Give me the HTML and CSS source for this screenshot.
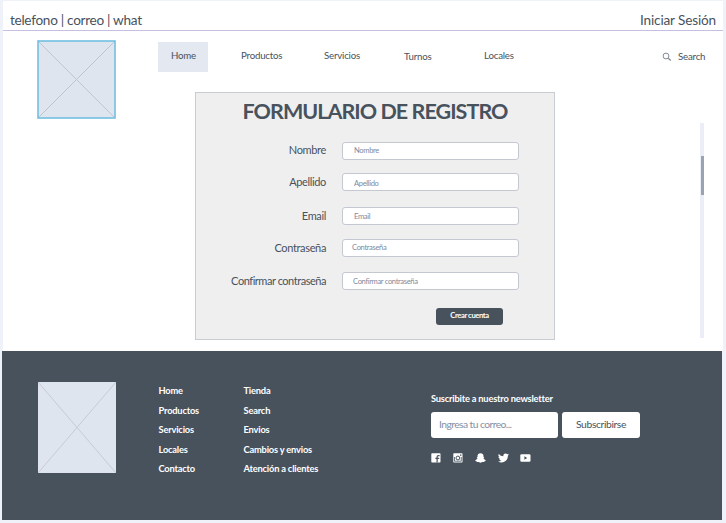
FILE: index.html
```html
<!DOCTYPE html>
<html lang="es">
<head>
<meta charset="utf-8">
<title>Formulario de registro</title>
<link rel="stylesheet" href="styles.css">
</head>
<body>
<div class="sheet">
  <div class="topbar"><span class="contact">telefono | correo | what</span><a class="login">Iniciar Sesión</a></div>
  <div class="main">
    <svg class="logo" viewBox="0 0 79 79"><rect x="1" y="1" width="77" height="77" fill="#dfe5ee" stroke="#72bfe2" stroke-width="1.6"/><path d="M2 2 77 77M77 2 2 77" stroke="#bfc5ce"/></svg>
    <div class="column">
      <nav class="nav">
        <a class="home">Home</a>
        <a class="productos">Productos</a>
        <a class="servicios">Servicios</a>
        <a class="turnos">Turnos</a>
        <a class="locales">Locales</a>
        <svg class="lens" viewBox="0 0 10 10" fill="none" stroke="#858b96"><circle cx="4" cy="4" r="2.9"/><path d="M6.2 6.2 8.8 8.6" stroke-width="1.3"/></svg>
        <a class="search">Search</a>
      </nav>
      <div class="content">
        <form class="panel">
          <h1>FORMULARIO DE REGISTRO</h1>
          <div class="row"><label>Nombre</label><div class="field">Nombre</div></div>
          <div class="row r2"><label>Apellido</label><div class="field f2">Apellido</div></div>
          <div class="row r3"><label>Email</label><div class="field f3">Email</div></div>
          <div class="row r4"><label>Contraseña</label><div class="field f4">Contraseña</div></div>
          <div class="row r5"><label class="wide">Confirmar contraseña</label><div class="field f5">Confirmar contraseña</div></div>
          <div class="create">Crear cuenta</div>
        </form>
        <div class="scroll"><div class="thumb"></div></div>
      </div>
    </div>
  </div>
</div>
<footer class="footer">
  <svg class="footlogo" viewBox="0 0 78 91"><path fill="#dfe5ee" d="M0 0h78v91H0z"/><path d="M0 0 78 91M78 0 0 91" stroke="#c6cbd2"/></svg>
  <div class="links first"><a>Home</a><a>Productos</a><a>Servicios</a><a>Locales</a><a>Contacto</a></div>
  <div class="links second"><a>Tienda</a><a>Search</a><a>Envios</a><a>Cambios y envios</a><a>Atención a clientes</a></div>
  <div class="news">
    <div class="newstitle">Suscribite a nuestro newsletter</div>
    <div class="signup"><div class="mail">Ingresa tu correo...</div><div class="subscribe">Subscribirse</div></div>
    <div class="social">
      <svg width="10" height="10" viewBox="0 0 10 10"><rect x=".3" y=".3" width="9.2" height="9.2" rx=".7" fill="#fff"/><path d="M8.6 2.7H7.4Q6.1 2.7 6.1 4v5.5M4.4 5.4h3.8" fill="none" stroke="#48525d" stroke-width="1.2"/></svg>
      <svg width="10" height="10" viewBox="0 0 10 10"><rect x=".3" y=".3" width="9.2" height="9.2" rx=".7" fill="#fff"/><path d="M1.5 4v4.2h6.8V4" fill="none" stroke="#48525d" stroke-width=".8"/><circle cx="4.9" cy="5" r="1.9" fill="none" stroke="#48525d"/><path d="M7 1.5h1.4v1.3H7z" fill="#48525d"/></svg>
      <svg width="11" height="10" viewBox="0 0 11 10"><path fill="#fff" d="M5.5.3C3.6.3 2.5 1.5 2.5 3v1L1.6 4.1 2.5 5C2.1 6.1 1.4 6.8.3 7.2l.2.9 1.2.3.4.7 1.5-.1 1.9.8 1.9-.8 1.5.1.4-.7 1.2-.3.2-.9C9.6 6.8 8.9 6.1 8.5 5l.9-.9L8.5 4V3C8.5 1.5 7.4.3 5.5.3z"/></svg>
      <svg width="11" height="10" viewBox="0 0 24 20"><path fill="#fff" d="M24 2.4a10 10 0 0 1-2.8.8A5 5 0 0 0 23.3.5a10 10 0 0 1-3.1 1.2 4.9 4.9 0 0 0-8.4 4.5A14 14 0 0 1 1.7 1.1a4.9 4.9 0 0 0 1.5 6.6A5 5 0 0 1 1 7.1a5 5 0 0 0 3.9 4.9 5 5 0 0 1-2.2.1 4.9 4.9 0 0 0 4.6 3.4A10 10 0 0 1 0 17.5 14 14 0 0 0 21.5 5z"/></svg>
      <svg class="video" width="11" height="10" viewBox="0 0 11 10"><rect x=".3" y="1.2" width="10.2" height="7.6" rx="1.2" fill="#fff"/><path d="M4.4 3.3v3.4L7.2 5z" fill="#48525d"/></svg>
    </div>
  </div>
</footer>
</body>
</html>
```

FILE: styles.css
```css
* { box-sizing: border-box; }
body { margin: 0; padding: 1px 3px 0 2px; height: 523px; overflow: hidden; background: #f0f2f9; font-family: Lato, sans-serif; color: #48525d; white-space: nowrap; }
svg { display: block; flex: none; }
.sheet { height: 350px; margin-left: 1px; width: 720px; background: #fff; }
.topbar { display: flex; justify-content: space-between; height: 30px; padding: 10px 7px 0; border-bottom: 1px solid #c8bedf; font-size: 13.6px; line-height: 18px; }
.contact { letter-spacing: -.29px; }
.login { letter-spacing: -.15px; }
.main { display: flex; }
.logo { width: 79px; height: 79px; margin: 9px 42px 0 34px; }
.column { flex: 1; padding-top: 11px; }
.nav { display: flex; height: 30px; font-size: 9.7px; line-height: 27px; letter-spacing: -.2px; }
.home { width: 50px; padding-left: 13px; letter-spacing: -.25px; background: #e4e8f1; }
.productos { width: 83px; margin-left: 33px; }
.servicios { width: 80px; }
.turnos { width: 80px; padding-top: 1px; }
.locales { width: 178px; }
.lens { width: 10px; height: 10px; margin: 10px 6px 0 0; }
.search { padding-top: 1px; }
.content { display: flex; margin-top: 20px; }
.panel { width: 360px; height: 248px; margin-left: 37px; background: #efeff0; border: 1px solid #c8ccd3; }
h1 { margin: 5px 0 18px; text-align: center; font-size: 21.5px; line-height: 26px; font-weight: 700; letter-spacing: -.95px; }
.row { display: flex; height: 18px; }
.row label { width: 130px; margin-right: 16px; text-align: right; font-size: 11px; line-height: 16px; letter-spacing: -.35px; }
.row.r2 label { line-height: 18px; }
.row.r3 label, .row.r4 label, .row.r5 label { line-height: 17px; }
.row .wide { letter-spacing: -.46px; }
.field { width: 177px; height: 18px; padding-left: 11px; border: 1px solid #c3c8d1; border-radius: 3px; background: #fff; color: #7f8aa0; font-size: 7.6px; line-height: 15px; letter-spacing: -.36px; }
.r2 { margin-top: 13px; }
.f2 { line-height: 18px; }
.r3 { margin-top: 16px; }
.f3 { line-height: 17px; }
.r4 { margin-top: 14px; }
.f4 { padding-left: 9px; }
.r5 { margin-top: 15px; }
.f5 { padding-left: 10px; line-height: 17px; }
.create { width: 67px; height: 17px; margin: 18px 0 0 240px; border-radius: 3px; background: #48525d; color: #fff; text-align: center; font-size: 7.6px; line-height: 14px; font-weight: 700; letter-spacing: -.4px; }
.scroll { width: 4px; height: 215px; margin: 31px 0 0 145px; padding: 33px 0 0 1px; background: #ebeef6; }
.thumb { height: 39px; background: #9aa3b2; }
.footer { display: flex; width: 720px; height: 169px; padding: 31px 0 0 36px; background: #48525d; color: #fff; }
.footlogo { width: 78px; height: 91px; }
.links { display: flex; flex-direction: column; margin-top: -1px; font-size: 9.3px; line-height: 19.5px; font-weight: 700; letter-spacing: -.19px; }
.first { width: 85px; margin-left: 42.5px; }
.second { width: 187.5px; }
.news { padding-top: 10px; }
.newstitle { font-size: 9.3px; line-height: 14px; font-weight: 700; letter-spacing: -.2px; }
.signup { display: flex; gap: 4px; margin-top: 6px; font-size: 10.3px; line-height: 25px; }
.mail, .subscribe { height: 26px; border-radius: 3px; background: #fff; }
.mail { width: 127px; padding-left: 8px; color: #8390a5; letter-spacing: -.56px; }
.subscribe { width: 78px; text-align: center; color: #48525d; letter-spacing: -.37px; }
.social { display: flex; gap: 12px; margin-top: 15px; }
.video { margin-left: -1px; }
```
